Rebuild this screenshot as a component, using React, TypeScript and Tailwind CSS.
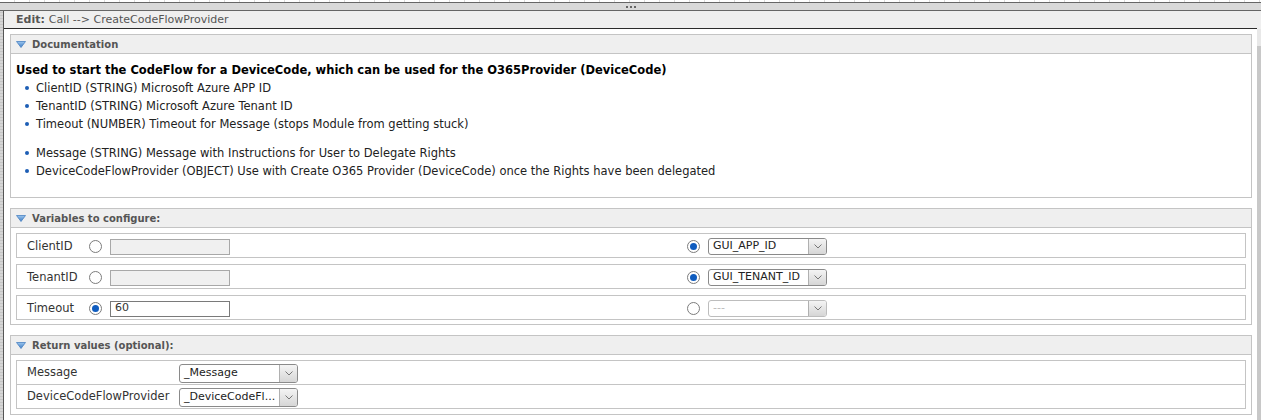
import { ReactNode } from "react";

const Triangle = () => (
  <svg width="10" height="7" viewBox="0 0 10 7" className="shrink-0">
    <defs>
      <linearGradient id="tri" x1="0" y1="0" x2="0" y2="1">
        <stop offset="0" stopColor="#9cc6ee" />
        <stop offset="1" stopColor="#3d7cc4" />
      </linearGradient>
    </defs>
    <polygon points="0.5,0.5 9.5,0.5 5,6.5" fill="url(#tri)" stroke="#4a82c2" strokeWidth="0.8" />
  </svg>
);

const Panel = ({ title, children }: { title: string; children: ReactNode }) => (
  <div className="border border-[#c4c4c4] bg-white">
    <div className="flex h-[19px] items-center gap-[6px] border-b border-[#c4c4c4] bg-[#efefef] pl-[5px] text-[10px] font-bold text-[#555]">
      <Triangle />
      <span>{title}</span>
    </div>
    {children}
  </div>
);

const Radio = ({ checked }: { checked?: boolean }) => (
  <span className="flex h-[13px] w-[13px] shrink-0 items-center justify-center rounded-full border border-[#7c7c7c] bg-white">
    {checked && <span className="h-[7px] w-[7px] rounded-full bg-[#0f5cbf]" />}
  </span>
);

const Select = ({
  value,
  disabled,
  tall,
}: {
  value: string;
  disabled?: boolean;
  tall?: boolean;
}) => (
  <div
    className={`flex w-[119px] shrink-0 items-stretch overflow-hidden rounded-[3px] border bg-white text-[11px] ${
      tall ? "h-[19px]" : "h-[17px]"
    } ${disabled ? "border-[#bdbdbd] text-[#bbb]" : "border-[#8a8a8a] text-[#222]"}`}
  >
    <span className="flex flex-1 items-center truncate pl-[4px]">{value}</span>
    <span className="flex w-[18px] items-center justify-center border-l border-[#b0b0b0] bg-[linear-gradient(#f4f4f4,#d6d6d6)]">
      <svg width="8" height="5" viewBox="0 0 8 5">
        <polyline points="0.5,0.5 4,4 7.5,0.5" fill="none" stroke="#777" strokeWidth="1" />
      </svg>
    </span>
  </div>
);

const variables = [
  { name: "ClientID", value: "", left: false, select: "GUI_APP_ID", right: true },
  { name: "TenantID", value: "", left: false, select: "GUI_TENANT_ID", right: true },
  { name: "Timeout", value: "60", left: true, select: "---", right: false },
];

const Bullet = ({ text }: { text: string }) => (
  <li className="flex items-center">
    <span className="ml-[9px] mr-[7px] h-[4px] w-[4px] rounded-full bg-[#1d5eb5]" />
    {text}
  </li>
);

export default function App() {
  return (
    <div className="flex h-[420px] w-[1261px] flex-col overflow-hidden bg-white font-['DejaVu_Sans',Verdana,sans-serif] text-[#333]">
      <div className="h-[2px] bg-[repeating-linear-gradient(90deg,#fff_0_14px,#dcdcdc_14px_15px)]" />
      <div className="flex h-[9px] items-center justify-center gap-[2px] border-y border-[#666] bg-[#d9d9d9]">
        <span className="h-[2px] w-[2px] bg-[#666]" />
        <span className="h-[2px] w-[2px] bg-[#666]" />
        <span className="h-[2px] w-[2px] bg-[#666]" />
      </div>
      <div className="flex flex-1">
        <div className="w-[4px] border-r border-[#555] bg-[repeating-linear-gradient(0deg,#d6d6d6_0_2px,#c6c6c6_2px_3px)]" />
        <div className="flex min-w-0 flex-1 flex-col">
          <div className="flex h-[18px] items-center border-b border-[#2b2b2b] bg-[#efefef] pl-[12px] pt-[1px] text-[11px] text-[#555]">
            <span className="font-bold">Edit:</span>
            <span className="ml-[4px]">Call --&gt; CreateCodeFlowProvider</span>
          </div>
          <div className="flex flex-col gap-[10px] pl-[6px] pr-[5px] pt-[5px]">
            <Panel title="Documentation">
              <div className="pb-[17px] pl-[5px] pt-[7px] text-[11.5px] leading-[18px] text-[#222]">
                <div className="font-bold text-black">
                  Used to start the CodeFlow for a DeviceCode, which can be used for the O365Provider (DeviceCode)
                </div>
                <ul>
                  <Bullet text="ClientID (STRING) Microsoft Azure APP ID" />
                  <Bullet text="TenantID (STRING) Microsoft Azure Tenant ID" />
                  <Bullet text="Timeout (NUMBER) Timeout for Message (stops Module from getting stuck)" />
                </ul>
                <ul className="mt-[11px]">
                  <Bullet text="Message (STRING) Message with Instructions for User to Delegate Rights" />
                  <Bullet text="DeviceCodeFlowProvider (OBJECT) Use with Create O365 Provider (DeviceCode) once the Rights have been delegated" />
                </ul>
              </div>
            </Panel>
            <Panel title="Variables to configure:">
              <div className="flex flex-col gap-[6px] px-[5px] pb-[4px] pt-[5px]">
                {variables.map((v) => (
                  <div
                    key={v.name}
                    className="flex h-[25px] items-center border border-[#c4c4c4] pt-[2px] text-[11.5px]"
                  >
                    <div className="flex w-[670px] items-center">
                      <span className="w-[72px] pl-[10px]">{v.name}</span>
                      <Radio checked={v.left} />
                      <div
                        className={`ml-[8px] flex h-[16px] w-[120px] items-center border pl-[4px] text-[11px] ${
                          v.left ? "border-[#7a7a7a] bg-white" : "border-[#a8a8a8] bg-[#f0f0f0]"
                        }`}
                      >
                        {v.value}
                      </div>
                    </div>
                    <Radio checked={v.right} />
                    <div className="ml-[8px]">
                      <Select value={v.select} disabled={!v.right} />
                    </div>
                  </div>
                ))}
              </div>
            </Panel>
            <Panel title="Return values (optional):">
              <div className="p-[5px]">
                <div className="border border-[#c4c4c4] text-[11.5px]">
                  {[
                    ["Message", "_Message"],
                    ["DeviceCodeFlowProvider", "_DeviceCodeFl..."],
                  ].map(([label, val], i) => (
                    <div
                      key={label}
                      className={`flex items-center pt-[1px] ${i > 0 ? "h-[24px] border-t border-[#c4c4c4]" : "h-[23px]"}`}
                    >
                      <span className="w-[162px] pl-[10px]">{label}</span>
                      <Select value={val} tall />
                    </div>
                  ))}
                </div>
              </div>
            </Panel>
          </div>
        </div>
        <div className="flex w-[4px] flex-col">
          <div className="h-[18px] bg-[#efefef]" />
          <div className="h-[17px] bg-[#e8e8e8]" />
          <div className="flex-1 bg-[#c8c8c8]" />
        </div>
      </div>
    </div>
  );
}
